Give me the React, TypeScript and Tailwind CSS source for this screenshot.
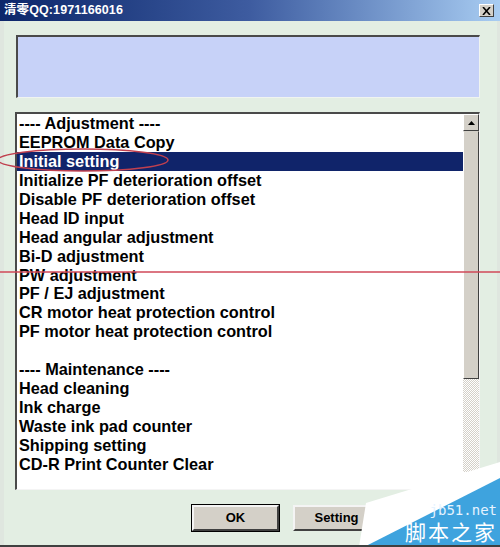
import { ReactNode } from "react";

const items: { label: string; selected?: boolean }[] = [
  { label: "---- Adjustment ----" },
  { label: "EEPROM Data Copy" },
  { label: "Initial setting", selected: true },
  { label: "Initialize PF deterioration offset" },
  { label: "Disable PF deterioration offset" },
  { label: "Head ID input" },
  { label: "Head angular adjustment" },
  { label: "Bi-D adjustment" },
  { label: "PW adjustment" },
  { label: "PF / EJ adjustment" },
  { label: "CR motor heat protection control" },
  { label: "PF motor heat protection control" },
  { label: "" },
  { label: "---- Maintenance ----" },
  { label: "Head cleaning" },
  { label: "Ink charge" },
  { label: "Waste ink pad counter" },
  { label: "Shipping setting" },
  { label: "CD-R Print Counter Clear" },
];

function WinButton({ children, isDefault }: { children: ReactNode; isDefault?: boolean }) {
  return (
    <button
      className={`w-[87px] h-[26px] bg-[#d4d0c8] text-[13px] font-bold text-black border-t-2 border-l-2 border-t-[#f4f4f4] border-l-[#f4f4f4] border-r-2 border-b-2 border-r-[#404040] border-b-[#404040] ${
        isDefault ? "outline outline-1 outline-black" : ""
      }`}
    >
      {children}
    </button>
  );
}

export default function App() {
  return (
    <div className="relative w-[500px] h-[547px] overflow-hidden bg-[#e3eee3] flex flex-col font-['Liberation_Sans','Noto_Sans_CJK_SC',sans-serif] border-b-2 border-b-[#404040]">
      {/* 标题栏 */}
      <div className="h-[21px] flex items-center justify-between pl-[4px] pr-[6px] bg-gradient-to-r from-[#0c266a] via-[#3e5ca0] to-[#a9cdf2]">
        <span className="text-white font-bold text-[12.5px] tracking-[0.1px]">清零QQ:1971166016</span>
        <div className="w-[15px] h-[13px] bg-[#d4d0c8] border border-t-white border-l-white border-r-[#404040] border-b-[#404040] flex items-center justify-center">
          <svg width="9" height="8" viewBox="0 0 9 8">
            <path d="M1 0 L8 8 M8 0 L1 8" stroke="#000" strokeWidth="1.6" />
          </svg>
        </div>
      </div>

      <div className="flex-1 flex flex-col pl-[15px] pr-[17px] border-l-[4px] border-l-[#dfe6df] border-r-[3px] border-r-[#dfe6df]">
        {/* 信息面板 */}
        <div className="mt-[14px] h-[63px] bg-[#c7d2f8] border-t-2 border-l-2 border-t-[#4a4a4a] border-l-[#4a4a4a] border-r border-b border-r-[#f0f4f0] border-b-[#f0f4f0] -ml-[3px]" />

        {/* 列表 */}
        <div className="mt-[14px] h-[378px] flex bg-white border-t-2 border-l-2 border-t-[#4a4a4a] border-l-[#4a4a4a] border-r border-b border-r-[#f4f4f4] border-b-[#f4f4f4] -ml-[4px]">
          <div className="flex-1 flex flex-col">
            {items.map((it, i) => (
              <div
                key={i}
                className={`h-[18.94px] leading-[18.94px] pl-[2px] text-[16.3px] font-bold whitespace-nowrap ${
                  it.selected ? "bg-[#10246a] text-white" : "text-black"
                }`}
              >
                {it.label}
              </div>
            ))}
          </div>
          {/* 滚动条 */}
          <div className="w-[16px] flex flex-col">
            <div className="h-[17px] bg-[#d4d0c8] border border-t-white border-l-white border-r-[#404040] border-b-[#404040] flex items-center justify-center">
              <svg width="7" height="4" viewBox="0 0 7 4">
                <path d="M0 4 L3.5 0 L7 4 Z" fill="#000" />
              </svg>
            </div>
            <div className="h-[248px] bg-[#d4d0c8] border border-t-[#d4d0c8] border-l-white border-r-[#404040] border-b-[#404040]" />
            <div className="flex-1 bg-[repeating-conic-gradient(#d4d0c8_0_25%,#ffffff_0_50%)] bg-[length:2px_2px]" />
            <div className="h-[17px] bg-[#d4d0c8] border border-t-white border-l-white border-r-[#404040] border-b-[#404040] flex items-center justify-center">
              <svg width="7" height="4" viewBox="0 0 7 4">
                <path d="M0 0 L3.5 4 L7 0 Z" fill="#000" />
              </svg>
            </div>
          </div>
        </div>

        {/* 按钮 */}
        <div className="mt-[15px] flex gap-[14px] pl-[173px]">
          <WinButton isDefault>OK</WinButton>
          <WinButton>Setting</WinButton>
        </div>
      </div>

      {/* 标注 */}
      <svg className="absolute left-0 top-0 pointer-events-none" width="500" height="547">
        <ellipse cx="83" cy="160" rx="85" ry="11" fill="none" stroke="#c0404f" strokeWidth="1.5" />
        <line x1="0" y1="272" x2="500" y2="272" stroke="#d04858" strokeWidth="1.5" />
        <polygon points="359,547 366,503 500,462 500,547" fill="#ffffff" />
        <polygon points="364,547 500,478 500,547" fill="#3ea3de" />
      </svg>
      <div className="absolute right-[3px] bottom-[1px] flex flex-col items-end gap-[2px] pointer-events-none">
        <span className="text-[14px] leading-[14px] text-[#e6f3ff] font-['DejaVu_Sans_Mono',monospace]">jb51.net</span>
        <span className="text-[21px] leading-[25px] text-white font-['Noto_Sans_CJK_SC',sans-serif] tracking-[2px]">脚本之家</span>
      </div>
    </div>
  );
}
